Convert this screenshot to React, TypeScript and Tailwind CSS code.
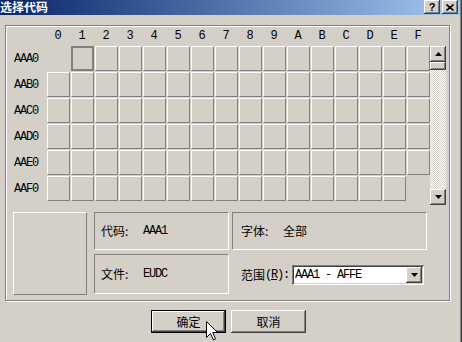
import React from "react";

const cols = ["0", "1", "2", "3", "4", "5", "6", "7", "8", "9", "A", "B", "C", "D", "E", "F"];
const rows = ["AAA0", "AAB0", "AAC0", "AAD0", "AAE0", "AAF0"];

const raised =
  "bg-[#d4d0c8] shadow-[inset_-1px_-1px_#404040,inset_1px_1px_#fff,inset_-2px_-2px_#808080]";
const mono = "font-['Liberation_Mono',monospace] text-[12px] tracking-[-1.2px]";
const cjk = "font-['Noto_Sans_CJK_SC',sans-serif] text-[12px]";

function Cell({ r, c }: { r: number; c: number }) {
  if ((r === 0 && c === 0) || (r === 5 && c === 15)) return <div className="h-[25px] w-[23px]" />;
  if (r === 0 && c === 1) return <div className="h-[25px] w-[23px] border-2 border-[#808080]" />;
  return (
    <div className="h-[25px] w-[23px] border border-t-white border-l-white border-r-[#808080] border-b-[#808080]" />
  );
}

function Tri({ up }: { up?: boolean }) {
  return (
    <svg width="7" height="4" viewBox="0 0 7 4">
      <path d={up ? "M3.5 0 L7 4 L0 4 Z" : "M0 0 L7 0 L3.5 4 Z"} fill="#000" />
    </svg>
  );
}

function Scrollbar() {
  return (
    <div className="flex h-[159px] w-[16px] flex-col">
      <div className={`flex h-[16px] items-center justify-center ${raised}`}>
        <Tri up />
      </div>
      <div className={`h-[8px] ${raised}`} />
      <div className="flex-1 bg-[repeating-conic-gradient(#fff_0_25%,#d4d0c8_0_50%)] bg-[length:2px_2px]" />
      <div className={`flex h-[16px] items-center justify-center ${raised}`}>
        <Tri />
      </div>
    </div>
  );
}

function InfoBox({ label, value, h, w, pl }: { label: string; value: React.ReactNode; h: string; w: string; pl: string }) {
  return (
    <div className={`flex items-center border border-t-[#808080] border-l-[#808080] border-r-white border-b-white ${h} ${w} ${pl}`}>
      <span className={`w-[42px] ${cjk}`}>{label}</span>
      {value}
    </div>
  );
}

export default function App() {
  return (
    <div className="relative flex h-[342px] w-[462px] overflow-hidden bg-[#d4d0c8] text-black">
      <div className="flex w-[460px] flex-col">
        {/* title bar */}
        <div className="flex h-[15px] items-start justify-between bg-gradient-to-r from-[#0a246a] to-[#a6caf0] pr-[2px]">
          <span className="font-['Noto_Sans_CJK_SC',sans-serif] text-[12px] font-bold leading-[13px] text-white">
            选择代码
          </span>
          <div className="flex gap-[2px]">
            <div className={`flex h-[14px] w-[16px] items-center justify-center ${raised} font-['Liberation_Sans',sans-serif] text-[11px] font-bold leading-none`}>
              ?
            </div>
            <div className={`flex h-[14px] w-[16px] items-center justify-center ${raised}`}>
              <svg width="8" height="7" viewBox="0 0 8 7">
                <path d="M0.5 0.5 L7.5 6.5 M7.5 0.5 L0.5 6.5" stroke="#000" strokeWidth="1.6" />
              </svg>
            </div>
          </div>
        </div>

        {/* body */}
        <div className="pl-[5px] pt-[10px]">
          <div className="flex h-[276px] w-[445px] flex-col border border-[#808080] shadow-[inset_1px_1px_0_#fff,1px_1px_0_#fff]">
            {/* column header */}
            <div className="flex h-[20px] items-center pl-[41px]">
              {cols.map((c) => (
                <div key={c} className={`w-[24px] pr-[3px] text-center ${mono}`}>
                  {c}
                </div>
              ))}
            </div>
            {/* grid */}
            <div className="flex h-[159px] items-start">
              <div className="flex w-[41px] flex-col gap-[1px]">
                {rows.map((r) => (
                  <div key={r} className={`flex h-[25px] items-center pl-[8px] ${mono}`}>
                    {r}
                  </div>
                ))}
              </div>
              <div className="grid grid-cols-[repeat(16,23px)] gap-[1px]">
                {rows.map((_, r) => cols.map((_, c) => <Cell key={`${r}-${c}`} r={r} c={c} />))}
              </div>
              <Scrollbar />
            </div>
            {/* info area */}
            <div className="mt-[7px] flex pl-[7px]">
              <div className="h-[83px] w-[74px] border border-t-white border-l-white border-r-[#808080] border-b-[#808080]" />
              <div className="ml-[7px] flex flex-col gap-[4px]">
                <InfoBox label="代码:" value={<span className={mono}>AAA1</span>} h="h-[38px]" w="w-[135px]" pl="pl-[6px]" />
                <InfoBox label="文件:" value={<span className={mono}>EUDC</span>} h="h-[40px]" w="w-[135px]" pl="pl-[6px]" />
              </div>
              <div className="ml-[3px] flex flex-col">
                <InfoBox label="字体:" value={<span className={cjk}>全部</span>} h="h-[38px]" w="w-[195px]" pl="pl-[8px]" />
                <div className="mt-[15px] flex items-center pl-[9px]">
                  <span className="flex w-[51px] items-center">
                    <span className={cjk}>范围</span>
                    <span className={mono}>
                      (<span className="underline">R</span>):
                    </span>
                  </span>
                  <div className="flex h-[20px] w-[132px] items-center bg-white pl-[3px] pr-[2px] shadow-[inset_1px_1px_#808080,inset_-1px_-1px_#fff,inset_2px_2px_#404040,inset_-2px_-2px_#d4d0c8]">
                    <span className={`flex-1 ${mono}`}>AAA1 - AFFE</span>
                    <div className={`flex h-[16px] w-[16px] items-center justify-center ${raised}`}>
                      <Tri />
                    </div>
                  </div>
                </div>
              </div>
            </div>
          </div>

          {/* buttons */}
          <div className="mt-[9px] flex gap-[5px] pl-[146px]">
            <button className="h-[23px] w-[75px] border border-black p-0">
              <div className={`flex h-full w-full items-center justify-center ${raised} ${cjk}`}>确定</div>
            </button>
            <button className={`flex h-[23px] w-[75px] items-center justify-center ${raised} ${cjk}`}>取消</button>
          </div>
        </div>
      </div>
      <div className="h-full w-[1px] bg-[#808080]" />
      <div className="h-full w-[1px] bg-[#404040]" />

      {/* mouse cursor */}
      <svg className="absolute left-[206px] top-[321px]" width="13" height="20" viewBox="0 0 13 20">
        <path d="M0.5 0.5 L0.5 16.5 L4.5 12.5 L7.5 19 L9.5 18 L6.8 11.5 L11.5 11.5 Z" fill="#fff" stroke="#000" strokeWidth="1" />
      </svg>
    </div>
  );
}
